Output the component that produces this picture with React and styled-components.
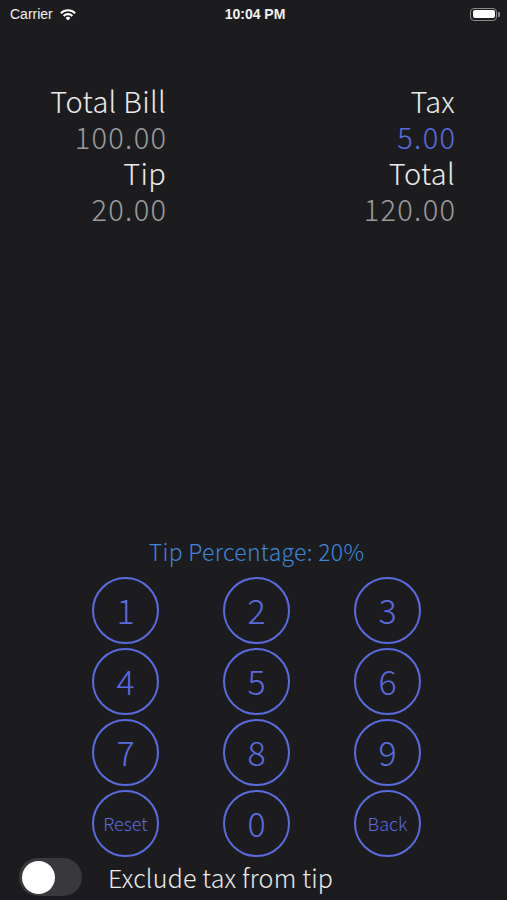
import styled, { createGlobalStyle } from "styled-components";

const GlobalStyle = createGlobalStyle`
    html, body {
        margin: 0;
        padding: 0;
        background-color: #1c1c1e;
    }
    * {
        box-sizing: border-box;
    }
`;

const keys = ["1", "2", "3", "4", "5", "6", "7", "8", "9", "Reset", "0", "Back"];

const App = () => {
    return (
        <Page>
            <GlobalStyle />

            {/* Status bar */}
            <StatusBar>
                <Carrier>
                    Carrier
                    <svg width="18" height="13" viewBox="0 0 18 13">
                        <path d="M9 12.5 L6.6 9.9 A3.4 3.4 0 0 1 11.4 9.9 Z" fill="#fff" />
                        <path d="M3.9 7.2 A7.3 7.3 0 0 1 14.1 7.2 L12.6 8.7 A5.2 5.2 0 0 0 5.4 8.7 Z" fill="#fff" />
                        <path d="M1.1 4.4 A11.3 11.3 0 0 1 16.9 4.4 L15.4 5.9 A9.2 9.2 0 0 0 2.6 5.9 Z" fill="#fff" />
                    </svg>
                </Carrier>
                <Clock>10:04 PM</Clock>
                <Battery>
                    <BatteryBody><BatteryFill /></BatteryBody>
                    <BatteryCap />
                </Battery>
            </StatusBar>

            {/* Summary */}
            <Summary>
                <Column>
                    <Label>Total Bill</Label>
                    <Value>100.00</Value>
                    <Label>Tip</Label>
                    <Value>20.00</Value>
                </Column>
                <Column>
                    <Label>Tax</Label>
                    <Value $accent>5.00</Value>
                    <Label>Total</Label>
                    <Value>120.00</Value>
                </Column>
            </Summary>

            <Spacer />

            {/* Keypad */}
            <TipPercentage>Tip Percentage: 20%</TipPercentage>
            <Keypad>
                {keys.map((k) => (
                    <Key key={k} $small={k.length > 1}>{k}</Key>
                ))}
            </Keypad>

            {/* Toggle */}
            <ToggleRow>
                <Switch><Knob /></Switch>
                <ToggleLabel>Exclude tax from tip</ToggleLabel>
            </ToggleRow>
        </Page>
    );
};

export default App;

// Styled Components
const Page = styled.div`
    height: 900px;
    display: flex;
    flex-direction: column;
    background-color: #1c1c1e;
    font-family: "Noto Sans CJK KR", "Noto Sans", sans-serif;
    font-weight: 300;
    color: #ececec;
    overflow: hidden;
`;

const StatusBar = styled.div`
    height: 28px;
    display: grid;
    grid-template-columns: 1fr auto 1fr;
    align-items: center;
    padding: 0 7px 0 10px;
    font-family: "Liberation Sans", "Noto Sans", sans-serif;
    font-weight: 400;
    font-size: 14px;
    color: #f2f2f2;
`;

const Carrier = styled.div`
    display: flex;
    align-items: center;
    gap: 6px;
`;

const Clock = styled.div`
    font-weight: 700;
`;

const Battery = styled.div`
    justify-self: end;
    display: flex;
    align-items: center;
`;

const BatteryBody = styled.div`
    width: 27px;
    height: 13px;
    border: 1px solid #8a8a8c;
    border-radius: 4px;
    padding: 1.5px;
`;

const BatteryFill = styled.div`
    width: 100%;
    height: 100%;
    background-color: #fff;
    border-radius: 2px;
`;

const BatteryCap = styled.div`
    width: 2px;
    height: 5px;
    margin-left: 1px;
    background-color: #8a8a8c;
    border-radius: 0 1px 1px 0;
`;

const Summary = styled.div`
    margin-top: 54px;
    width: 455px;
    display: grid;
    grid-template-columns: 166px 1fr;
`;

const Column = styled.div`
    display: flex;
    flex-direction: column;
    align-items: flex-end;
`;

const Label = styled.div`
    font-size: 29px;
    line-height: 36px;
    letter-spacing: 0.3px;
    color: #ececec;
`;

const Value = styled.div`
    font-size: 29px;
    line-height: 36px;
    letter-spacing: 1.3px;
    margin-right: -1.3px;
    color: ${(p) => (p.$accent ? "#5a6ae0" : "#9b9b9d")};
`;

const Spacer = styled.div`
    flex: 1;
`;

const TipPercentage = styled.div`
    text-align: center;
    padding-left: 6px;
    font-size: 23px;
    line-height: 28px;
    letter-spacing: 0.3px;
    color: #3f86db;
    margin-bottom: 12px;
`;

const Keypad = styled.div`
    display: grid;
    grid-template-columns: repeat(3, 67px);
    grid-auto-rows: 67px;
    column-gap: 64px;
    row-gap: 4px;
    padding-left: 92px;
`;

const Key = styled.div`
    border: 2px solid #5a6ae0;
    border-radius: 50%;
    display: flex;
    align-items: center;
    justify-content: center;
    color: #5a6ae0;
    font-size: ${(p) => (p.$small ? "18px" : "34px")};
    padding-bottom: 2px;
`;

const ToggleRow = styled.div`
    margin-top: 1px;
    height: 38px;
    margin-bottom: 4px;
    display: flex;
    align-items: center;
    padding-left: 19px;
`;

const Switch = styled.div`
    width: 63px;
    height: 38px;
    border-radius: 19px;
    background-color: #39393d;
    display: flex;
    align-items: center;
    padding-left: 3px;
`;

const Knob = styled.div`
    width: 33px;
    height: 33px;
    border-radius: 50%;
    background-color: #fff;
`;

const ToggleLabel = styled.div`
    margin-left: 26px;
    font-size: 25px;
    letter-spacing: 0.2px;
    color: #ececec;
`;
